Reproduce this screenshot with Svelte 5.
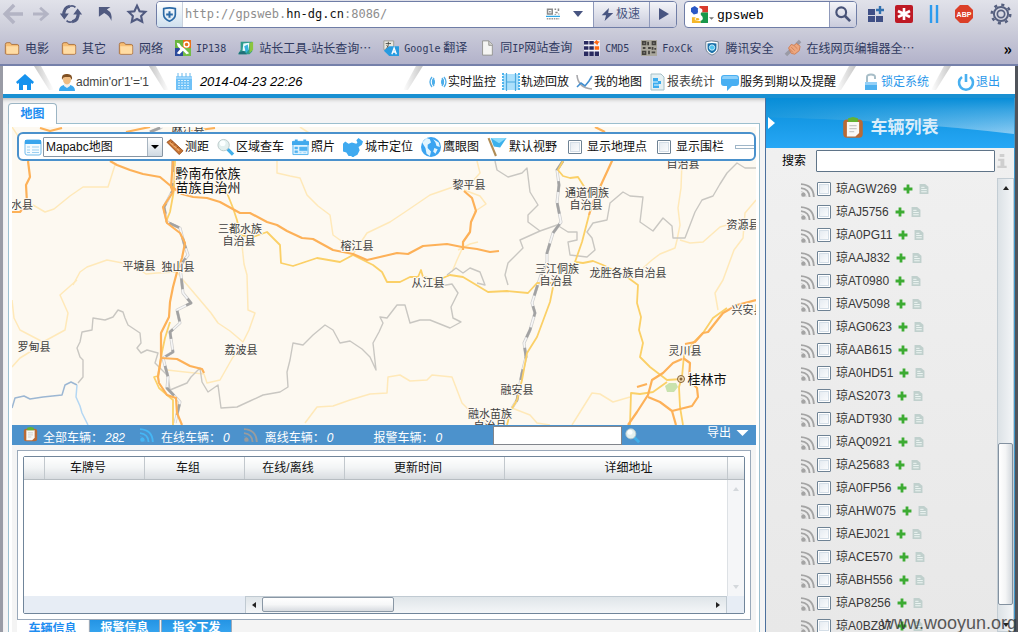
<script>
  const bookmarks = [
    { icon: 'folder', parts: ['电影'] },
    { icon: 'folder', parts: ['其它'] },
    { icon: 'folder', parts: ['网络'] },
    { icon: 'ip', parts: ['', 'IP138'] },
    { icon: 'tool', parts: ['站长工具-站长查询⋯'] },
    { icon: 'translate', parts: ['', 'Google', ' 翻译'] },
    { icon: 'page', parts: ['同', 'IP', '网站查询'] },
    { icon: 'grid', parts: ['', 'CMD5'] },
    { icon: 'qr', parts: ['', 'FoxCk'] },
    { icon: 'shield', parts: ['腾讯安全'] },
    { icon: 'hands', parts: ['在线网页编辑器全⋯'] }
  ];
  const menu = [
    { icon: 'signal', label: '实时监控' },
    { icon: 'film', label: '轨迹回放' },
    { icon: 'chart', label: '我的地图' },
    { icon: 'report', label: '报表统计', soft: true },
    { icon: 'bubble', label: '服务到期以及提醒' }
  ];
  const tools = [
    { icon: 'ruler', label: '测距' },
    { icon: 'lens', label: '区域查车' },
    { icon: 'photo', label: '照片' },
    { icon: 'china', label: '城市定位' },
    { icon: 'globe', label: '鹰眼图' },
    { icon: 'flag', label: '默认视野' }
  ];
  const plates = ['AGW269', 'AJ5756', 'A0PG11', 'AAJ832', 'AT0980', 'AV5098', 'AG0623', 'AAB615', 'A0HD51', 'AS2073', 'ADT930', 'AQ0921', 'A25683', 'A0FP56', 'AHW075', 'AEJ021', 'ACE570', 'ABH556', 'AP8256', 'A0BZ87'];
  const places = [
    [188, 133, '麻江县'], [22, 209, '水县'], [240, 233, '三都水族'], [239, 245, '自治县'],
    [357, 250, '榕江县'], [139, 270, '平塘县'], [178, 271, '独山县'], [469, 189, '黎平县'],
    [587, 197, '通道侗族'], [586, 209, '自治县'], [683, 168, '自治县'], [743, 229, '资源县'],
    [557, 273, '三江侗族'], [556, 285, '自治县'], [628, 277, '龙胜各族自治县'], [428, 287, '从江县'],
    [34, 351, '罗甸县'], [241, 354, '荔波县'], [685, 355, '灵川县'], [748, 314, '兴安县'],
    [517, 394, '融安县'], [490, 418, '融水苗族'], [490, 430, '自治县']
  ];
  const minorRoads = [
    '33 205 45 212 54 209 70 196 83 187 108 187 115 165',
    '277 161 277 173 290 176 300 178 307 195 318 206 330 215 333 235 347 245',
    '353 254 367 233 390 222 405 212 430 195 453 187 470 184 480 173 477 161',
    '73 285 80 272 87 267 107 260 133 265 146 274 157 273 177 272',
    '77 280 60 295 68 313 65 330 43 342 20 330 14 318 12 300', '12 367 20 358 33 350',
    '237 230 242 245 244 264 247 275 248 310 255 313 249 330 243 342 230 331 218 323 211 313 200 300 183 280 177 272',
    '243 345 233 357 220 380 207 383 204 374 185 372 167 370',
    '305 423 317 407 333 406 350 400 370 394 387 393 388 377 400 375 410 381 427 380 432 375 452 377 462 403 475 416 490 425',
    '572 425 592 393 600 394 613 402 630 397',
    '682 161 681 188 678 208 680 225 677 240 675 248 660 254 652 260 643 268',
    '680 240 690 243 703 242 720 227 737 222', '756 200 745 213 743 238 734 250 723 280 715 293 718 310',
    '463 247 457 260 452 272', '12 127 24 145 30 161', '300 127 320 140', '458 250 470 244 478 242',
    '464 190 480 196 486 204 474 212', '512 408 530 415 537 423 550 425'
  ];
  const yellowRoads = [
    '213 185 227 193 233 208 237 220 240 235 253 237 267 232 280 245 281 263 293 266 302 263 317 258 340 262 353 255 373 265 382 272 387 282 400 282 410 277 418 277 421 270 423 277 438 280 450 275 463 277 488 292 507 291 528 293 537 283 553 283',
    '563 161 558 170 563 176 570 178 578 177 585 188 592 190', '589 215 582 242 575 262 583 263 593 261 603 265 627 277 638 285 637 303 641 317 639 330 643 343 640 357 650 367 667 380 682 379',
    '553 287 550 302 537 337 527 353 522 380 517 400 511 410 507 425',
    '175 161 174 190 170 212 166 222', '170 322 165 338 162 352 158 376 154 377 159 388 173 400 173 425',
    '727 308 713 318 703 333 693 343 684 355 682 377 679 387 680 407 683 425', '630 425 631 393 640 394 653 392 667 382'
  ];
  const mainRoads = [
    '110 161 117 165 130 170 143 174 160 177 172 187 182 194 193 197 207 198 220 202 240 213 250 213 267 222 277 225 287 231 302 238 313 239 333 250 353 254 367 260 380 257 397 253 408 254 423 246 447 244 462 247 477 249 490 252 499 251',
    '175 127 173 161 171 187 173 192 163 207 167 223 180 233 185 243 182 258 177 272 173 287 170 302 169 317 161 333 161 358 158 377 159 383 167 395 176 398 177 413 182 425',
    '161 358 177 359 190 366 202 369 204 373', '28 161 30 177 26 185 27 203 20 212 12 212',
    '464 191 472 198 476 211 471 222 470 232 463 242 463 250', '617 150 612 161 600 187 593 202 589 215',
    '756 300 737 305 723 313 708 332 703 333 695 342 685 344',
    '683 358 690 363 689 380 697 388 698 397 692 406 672 411 660 402 648 397',
    '682 359 673 363 663 373 652 380 648 395 637 412 628 425', '672 411 676 425', '637 387 647 384',
    '40 128 50 131 62 128', '126 132 150 127', '185 132 215 128', '595 127 605 132'
  ];
  const rails = [
    '173 161 173 190 164 207 167 222 180 228 184 243 188 255 180 266 183 293 191 303 177 310 180 323 170 332 173 352 163 358 168 377 167 388 180 402 175 423',
    '563 161 557 170 559 185 557 202 561 222 553 233 547 253 547 262 541 275 537 287 532 303 535 313 530 330 524 343 526 357 522 373 517 400 512 408',
    '150 132 162 127'
  ];
  const borders = [
    '78 383 83 377 83 360 80 357 77 348 80 342 82 332 92 330 93 318 105 320 113 317 118 310 123 312 125 318 128 325 140 333 141 343 137 348 141 353 147 350 158 353 155 363 168 376 170 390 187 383 191 377 200 368 202 382 208 392 218 385 221 408 237 407 250 401 263 395 280 392 288 387 287 372 290 360 293 343 303 345 313 335 325 325 333 330 340 343 350 341 362 349 370 357 376 370 373 343 379 332 383 323 380 317 387 318 397 305 405 305 410 323 420 320 430 320 440 324 450 328 461 322 453 318 451 307 458 293 452 284 440 286',
    '495 161 497 170 508 177 522 173 527 168 530 192 538 205 528 215 528 222 540 231 557 225 568 232 577 232 577 240 568 242 570 255 587 257 595 250 592 238 587 232 593 223 607 220 610 203 623 192 630 196 643 197 640 222 653 231 663 218 672 226 673 238 685 238 695 212 702 200 713 196 720 184 727 173 737 163 745 168 756 168',
    '540 231 520 240 523 248 508 263 505 275 508 285',
    '447 275 456 268 463 273 470 268 480 272 485 285 477 283'
  ];
  let mapType = $state('Mapabc地图');
  let query = $state('gpsweb');
</script>

{#snippet icon(name)}
  <svg class="ico {name}" viewBox="0 0 18 18" aria-hidden="true">
    {#if name === 'folder'}
      <path d="M1.5 15V5q0-2 2-2h3.500l1.500 2H15q1.500 0 1.500 2v8q0 1-1.500 1H3q-1.500 0-1.500-1z" fill="#f6bd73" stroke="#a86f3c" /><path d="M2.500 7h13.500v7q0 1.500-1 1.500H3z" fill="#ffdca4" />
    {:else if name === 'ip'}
      <path d="M0 0h9v9H0z" fill="#69b53f" /><path d="M9 0h9v9H9z" fill="#e8701a" /><path d="M0 9h9v9H0z" fill="#2b4a9c" /><path d="M9 9h9v9H9z" fill="#74bd46" /><path d="M2 3l3 1 2 3 3 2 6 6-3 1-4-4-4 4-3-1 4-5-3-3z" fill="#fff" /><circle cx="13" cy="5" r="2.800" fill="none" stroke="#fff" stroke-width="1.600" />
    {:else if name === 'tool'}
      <path d="M3 2h13v11l-3 3H0l3-5z" fill="#2d9b8c" /><path d="M6 4l7-1-1 8-7 2z" fill="#e8fbff" /><path d="M7 7l4-2 1 6-3 4z" fill="#35b2dc" /><path d="M13 3l4-1v9l-4 4z" fill="#8bc53f" /><path d="M1 14l5-2 4 4H1z" fill="#206e78" />
    {:else if name === 'translate'}
      <path d="M1 1h11v10H1z" fill="#e9e8e1" stroke="#9b9b91" /><path d="M3 4h6M6 2v3q0 4-3 5M4 6q2 3 5 4" stroke="#4a4a42" fill="none" /><path d="M7 7h11v11H7l-6-6z" fill="#279be0" /><path d="M10 16l2.500-7 2.500 7M11 13.500h3" fill="none" stroke="#fff" stroke-width="1.500" />
    {:else if name === 'page'}
      <path d="M4 1h7l4 4v12H4z" fill="#f5f5f3" stroke="#91918d" /><path d="M11 1v5h4" fill="#d0d0cc" stroke="#91918d" />
    {:else if name === 'grid'}
      <path d="M0 0h18v18H0z" fill="#f3f3fa" /><path d="M0 1h5v4H0zM6 1h5v4H6zM0 7h5v4H0zM6 7h5v4H6zM0 13h5v5H0zM6 13h5v5H6zM12 13h5v5h-5z" fill="#292a60" /><path d="M12 7h5v4h-5zM14 0l1.500 1.500L18 2l-2 1.500-1 2.500-2-2-2-1z" fill="#ff6814" />
    {:else if name === 'qr'}
      <path d="M0 0h18v18H0z" fill="#aaa79d" /><path d="M1 1h5v5H1zM12 1h5v5h-5zM1 12h5v5H1zM7 2h2v4H7zM8 8h3v2H8zM2 8h3v2H2zM12 8h2v3h-2zM8 12h2v4H8zM12 13h4v2h-4zM15 9h2v2h-2z" fill="#45433f" /><path d="M3 3h1v1H3zM14 3h1v1h-1zM3 14h1v1H3z" fill="#fff" />
    {:else if name === 'shield'}
      <path d="M2 2q6-2 14 0v7q0 5-7 8-7-3-7-8z" fill="#fff" stroke="#64798c" /><path d="M4 4q5-1.500 10 0v5q0 4-5 6-5-2-5-6z" fill="#1a6fa8" /><circle cx="9" cy="8.500" r="3" fill="#4fc4ef" stroke="#d6f5ff" />
    {:else if name === 'hands'}
      <path d="M1 17l5-5M13 5l4-4" stroke="#9a9aa6" stroke-width="4" /><path d="M4 9l3-4 3 1 3-2 4 3-1 5-5 4-4-1z" fill="#eda77f" stroke="#cf7c50" /><path d="M7 8l4 4M10 6l4 4M5 10l4 4" stroke="#cb8058" />
    {:else if name === 'signal'}
      <g fill="none" stroke="#52aee8" stroke-width="1.300"><path d="M3 4q-4 5 0 10M15 4q4 5 0 10M5 5q-3 4 0 8M13 5q3 4 0 8" /></g><ellipse cx="4.500" cy="9" rx="1.500" ry="3" fill="#4caeea" /><ellipse cx="13.500" cy="9" rx="1.500" ry="3" fill="#4caeea" />
    {:else if name === 'film'}
      <path d="M1 1h16v16H1z" fill="#ade0fb" /><path d="M1 0v18M17 0v18" stroke="#4fb4ed" stroke-width="2" stroke-dasharray="2 1" /><path d="M4.500 0v18M13.500 0v18M5 9h8" stroke="#4da9df" stroke-width="1.200" />
    {:else if name === 'chart'}
      <path d="M2 2q1 13 15 14" fill="none" stroke="#a8a8ac" stroke-width="1.600" /><path d="M2 14l4-4 4 3 4-5 3-5" fill="none" stroke="#418ed0" stroke-width="1.600" />
    {:else if name === 'report'}
      <path d="M3 1h10l3 3v13H3z" fill="#e4f0f3" stroke="#a5c0c8" /><path d="M5 5h5v3h3v3h-2v4H5z" fill="#3bacee" /><path d="M5 9h5M6 12h6" stroke="#e4f7ff" />
    {:else if name === 'bubble'}
      <path d="M3 2h12q3 0 3 3v5q0 3-3 3h-4l-5 5v-5H3q-3 0-3-3V5q0-3 3-3z" fill="#49aff2" /><path d="M3 3h12q2 0 2 3H1q0-3 2-3z" fill="#8dd0fa" />
    {:else if name === 'lock'}
      <path d="M5 9V4q0-2.500 4-2.500T13 4v2" fill="none" stroke="#a8bec8" stroke-width="2" /><path d="M3 9h12v8H3z" fill="#4eb1ef" /><path d="M3 9h12v3H3z" fill="#93d0f7" />
    {:else if name === 'power'}
      <path d="M5 4a7 7 0 1 0 8 0" fill="none" stroke="#49b0f0" stroke-width="2.600" /><path d="M9 1v8" stroke="#49b0f0" stroke-width="2.600" />
    {:else if name === 'home'}
      <path d="M9 1l9 8-1.500 2L15 10v7h-4v-5H7v5H3v-7l-1.500 1L0 9z" fill="#1592ee" />
    {:else if name === 'user'}
      <path d="M1 18q0-5 5-6h6q5 1 5 6z" fill="#3ba8ee" /><path d="M6 10h6v3l-3 2-3-2z" fill="#f3f0ec" /><ellipse cx="9" cy="6.500" rx="4" ry="5" fill="#f0bd83" /><path d="M4 7Q3 1 8 1q7-1 6 6l-2-3H7q-2 0-3 3z" fill="#805022" />
    {:else if name === 'calendar'}
      <path d="M1 3h16v14H1z" fill="#6fc1f7" /><path d="M1 3h16v3H1z" fill="#9cd5fb" /><path d="M3 0v4M7 0v4M11 0v4M15 0v4" stroke="#6bb8ea" /><path d="M3 7.500h12M3 10h12M3 12.500h12M3 15h12" stroke="#d8f1ff" stroke-dasharray="2 1" />
    {:else if name === 'window'}
      <rect x="1" y="2" width="16" height="15" rx="2" fill="#f4fbff" stroke="#73bbea" /><path d="M1 2h16v4H1z" fill="#3aa5ed" /><path d="M3 9h3M8 9h7M3 12h3M8 12h7M3 14.500h3M8 14.500h7" stroke="#9bcff0" />
    {:else if name === 'ruler'}
      <path d="M1 4l4-3 13 12-4 4z" fill="#c87432" stroke="#99501e" /><path d="M4 4l10 9" stroke="#f0ac6c" stroke-width="1.500" /><path d="M7 3L5.500 4.500M10 6L8.500 7.500M13 9l-1.500 1.500" stroke="#8c4418" />
    {:else if name === 'lens'}
      <path d="M11 11l6 6" stroke="#42afe9" stroke-width="3.500" /><circle cx="7" cy="7" r="6" fill="#e3f0ef" stroke="#bac9c9" /><circle cx="6" cy="5" r="3" fill="#fbffff" />
    {:else if name === 'photo'}
      <path d="M1 3h16v14H1z" fill="#dff3ff" stroke="#4fb1ef" /><path d="M0 3h18v4H0zM3 1h3v3H3zM12 1h3v3h-3z" fill="#41a9ed" /><path d="M8 9h8v4H8zM3 9h3v2H3zM3 13h3v2H3zM8 15h2M12 15h3" fill="#51b3f1" stroke="#51b3f1" stroke-width=".500" />
    {:else if name === 'china'}
      <path d="M0 6l2-2 3 2 3-1 4 1 1-1-1-2 2-2 4 3-1 3-3 2 1 3-2 4-4 2-2-1-2 0-2-3-3-1z" fill="#3faaf0" /><circle cx="9" cy="17" r="1" fill="#3faaf0" />
    {:else if name === 'globe'}
      <circle cx="9" cy="9" r="9" fill="#3ba4f1" /><path d="M1 5l4-4 3 1 1 3-3 2 0 3 3 3-1 4-3-2-1-5zM11 2l5 3 1 4-3-1-1-3zM12 10l3 1-2 4-2-2z" fill="#e2f5ff" />
    {:else if name === 'flag'}
      <path d="M3 1h15l-6 9-6-1z" fill="#3bb1ec" /><path d="M3 1h15l-7 5z" fill="#8adaf9" /><path d="M1 1l7 17" stroke="#b18d55" stroke-width="2" />
    {:else if name === 'board'}
      <rect x="1" y="2" width="16" height="15" rx="3" fill="#b86a36" /><path d="M4 4h10v9l-3 3H4z" fill="#f9f9f6" /><path d="M6 7h6M6 9.500h6M6 12h4" stroke="#c9c9c7" /><path d="M5 1l4-1 4 1v3H5z" fill="#64b332" />
    {:else if name === 'rss'}
      <g fill="none" stroke="currentColor" stroke-width="2.400"><path d="M0 6.500q10.500 1 11 11.500M0 1.500q16 1 16.500 16.500" /><path d="M0 11q6 1 6.500 7" stroke-width="1.200" opacity=".500" /></g><circle cx="3" cy="15" r="2.800" fill="currentColor" />
    {:else if name === 'plus'}
      <path d="M9 1v16M1 9h16" stroke="#3cab32" stroke-width="5" />
    {:else if name === 'doc'}
      <path d="M1 0h10l6 5v13H1z" fill="#c0d0cd" /><path d="M4 6h6M4 10h10M4 14h10" stroke="#f4faf8" stroke-width="1.600" />
    {:else if name === 'info'}
      <path d="M6 0h6v4H6zM4 6h8v9h3v3H3v-3h4V9H4z" fill="#cfcfcf" />
    {:else if name === 'back'}
      <path d="M18 9H4M10 1L2 9l8 8" fill="none" stroke="#b3b4c4" stroke-width="3.200" />
    {:else if name === 'forward'}
      <path d="M0 9h14M8 2l8 7-8 7" fill="none" stroke="#b3b4c4" stroke-width="3.200" />
    {:else if name === 'reload'}
      <path d="M8 2Q2 3 2.500 11M10 16q6-1 5.500-9" fill="none" stroke="#505a80" stroke-width="2.800" /><path d="M-1 8.500h8L3 14zM19 9.500h-8L15 4z" fill="#505a80" /><path d="M8 2q3-1 5 1M10 16q-3 1-5-1" fill="none" stroke="#505a80" stroke-width="1.600" />
    {:else if name === 'undo'}
      <path d="M1 1h13l-4 3q7 4 5 13-2-6-8-9l-6 4z" fill="#505a80" />
    {:else if name === 'star'}
      <path d="M9 1.500l2.300 5 5.200.600-3.800 3.700 1 5.200L9 13.500 4.300 16l1-5.200L1.500 7.100l5.200-.600z" fill="none" stroke="#505a80" stroke-width="1.900" />
    {:else if name === 'safe'}
      <path d="M2 2q7-2 14 0v7q0 5-7 8-7-3-7-8z" fill="none" stroke="#2c6aa6" stroke-width="2" /><path d="M9 5v8M5 9h8" stroke="#2c6aa6" stroke-width="2.400" />
    {:else if name === 'code'}
      <path d="M1 2h8v8H1zM11 2h2v2h-2zM15 2h2v3h-2zM12 6h3v2h-3zM16 8h1v2h-1zM11 9h2v1h-2z" fill="#8b8b8b" /><path d="M3 4h4v4H3z" fill="#fff" /><path d="M4 5h2v2H4z" fill="#888" /><path d="M0 12h18" stroke="#2ba6e8" stroke-width="1.500" /><path d="M1 15h16" stroke="#999" stroke-width="2" stroke-dasharray="2 1" />
    {:else if name === 'bolt'}
      <path d="M11 0L1 10h6l-2 8L17 7h-7z" fill="#485581" />
    {:else if name === 'search'}
      <circle cx="7" cy="7" r="5.500" fill="none" stroke="#485378" stroke-width="2.400" /><path d="M11 11l6 6" stroke="#485378" stroke-width="3" />
    {:else if name === 'google'}
      <path d="M0 0h9v10H0z" fill="#fff" /><path d="M9 0h9v7H9z" fill="#d93b2d" /><path d="M10 7h8v11h-8z" fill="#19974b" /><path d="M1 12h9v6H1z" fill="#f5b729" /><path d="M0 2l4-2 4 3-1 5-4 1-3-3z" fill="#2a57c5" /><path d="M8 2q5 0 4 4-4 2 0 5 2 4-3 5-6 0-5-3 1-2 5-2-2-2 0-4-3-2-1-5z" fill="#fff" /><path d="M5 13q3-1 4 1-1 2-4 1z" fill="#f5b729" />
    {:else if name === 'apps'}
      <path d="M1 4h7v6H1zM1 11h7v6H1zM9 11h7v6H9z" fill="#3f4f85" /><path d="M13 1v8M9 5h8" stroke="#3271ae" stroke-width="2.400" />
    {:else if name === 'asterisk'}
      <rect width="18" height="18" rx="2" fill="#be1924" /><path d="M9 3v12M3 6l12 6M15 6L3 12" stroke="#fff" stroke-width="2.600" />
    {:else if name === 'bars'}
      <path d="M2 0v18M8 0v18" stroke="#2c9bee" stroke-width="2.400" />
    {:else if name === 'abp'}
      <path d="M5 0h8l5 5v8l-5 5H5l-5-5V5z" fill="#db3f28" /><text x="9" y="12" text-anchor="middle" class="abp-text">ABP</text>
    {:else if name === 'gear'}
      <circle cx="9" cy="9" r="7.600" fill="none" stroke="#56607f" stroke-width="2" stroke-dasharray="2.500 3.470" /><circle cx="9" cy="9" r="5.800" fill="none" stroke="#56607f" stroke-width="1.600" /><circle cx="9" cy="9" r="3" fill="none" stroke="#56607f" stroke-width="1.400" />
    {/if}
  </svg>
{/snippet}

<div class="screen">
  <header class="browser">
    <div class="address-row">
      <div class="nav-buttons">
        {#each ['back', 'forward', 'reload', 'undo', 'star'] as n}
          <button aria-label={n}>{@render icon(n)}</button>
        {/each}
      </div>
      <div class="url-box">
        <button class="safe-btn" aria-label="safe">{@render icon('safe')}</button>
        <div class="url">http://gpsweb.<b>hn-dg.cn</b>:8086/</div>
        {@render icon('code')}
        <svg class="down" viewBox="0 0 10 6" aria-hidden="true"><path d="M0 0h10L5 6z" fill="#485581" /></svg>
        <button class="speed">{@render icon('bolt')}极速</button>
        <button class="go" aria-label="go"><svg viewBox="0 0 10 12"><path d="M0 0l10 6-10 6z" fill="#485581" /></svg></button>
      </div>
      <div class="search-box">
        {@render icon('google')}
        <svg class="mini" viewBox="0 0 6 3" aria-hidden="true"><path d="M0 0h6L3 3z" fill="#777" /></svg>
        <input aria-label="search" bind:value={query} />
        <button aria-label="search">{@render icon('search')}</button>
      </div>
      <div class="plugins">
        {#each ['apps', 'asterisk', 'bars', 'abp', 'gear'] as n}
          <button aria-label={n}>{@render icon(n)}</button>
        {/each}
      </div>
    </div>
    <nav class="bookmarks">
      {#each bookmarks as b}
        <a href="#top">{@render icon(b.icon)}<span>{b.parts[0]}{#if b.parts[1]}<i>{b.parts[1]}</i>{/if}{b.parts[2] ?? ''}</span></a>
      {/each}
      <button class="more">»</button>
    </nav>
  </header>

  <div class="app">
    <header class="topbar">
      <a class="home" href="#top" aria-label="home">{@render icon('home')}</a>
      <span class="slant falling"></span>
      <span class="who">{@render icon('user')}admin'or'1'='1</span>
      <span class="slant falling"></span>
      <span class="date">{@render icon('calendar')}<em>2014-04-23 22:26</em></span>
      <span class="slant rising push"></span>
      <nav class="menu">
        {#each menu as m}
          <a href="#top" class:soft={m.soft}>{@render icon(m.icon)}{m.label}</a>
        {/each}
      </nav>
      <span class="slant rising"></span>
      <a class="act" href="#top">{@render icon('lock')}锁定系统</a>
      <span class="slant rising"></span>
      <a class="act exit" href="#top">{@render icon('power')}退出</a>
    </header>

    <div class="columns">
      <main>
        <div class="map-tabs"><button>地图</button></div>
        <div class="pane">
          <section class="map">
            <svg class="drawing" viewBox="12 127 744 298" preserveAspectRatio="xMidYMid slice" role="img" aria-label="地图">
              <rect x="12" y="127" width="744" height="298" fill="#fdf9f1" />
              <g fill="none" stroke-linejoin="round">
                <g stroke="#ffe9b9" stroke-width="1.500">{#each minorRoads as p}<polyline points={p} />{/each}</g>
                <g stroke="#c9c7c2" stroke-width="1.400">{#each borders as p}<polyline points={p} />{/each}</g>
                <polyline points="12 408 15 398 24 396 30 399 43 397 62 395 65 385 71 382 77 385" stroke="#9cb7d3" stroke-width="1.500" />
                <polyline points="77 385 76 397 80 406 82 413 88 425" stroke="#b4d7f3" stroke-width="1.500" />
                <g stroke="#cdcdcd" stroke-width="3">{#each rails as p}<polyline points={p} />{/each}</g>
                <g stroke="#f6f6f6" stroke-width="1.600">{#each rails as p}<polyline points={p} />{/each}</g>
                <g stroke="#a2a2a2" stroke-width="2.600" stroke-dasharray="11 11">{#each rails as p}<polyline points={p} />{/each}</g>
                <g stroke="#fbd067" stroke-width="1.800">{#each yellowRoads as p}<polyline points={p} />{/each}</g>
                <g stroke="#fdb158" stroke-width="2.200">{#each mainRoads as p}<polyline points={p} />{/each}</g>
              </g>
              <path d="M665 386l4-3h7l2 4-4 5h-7z" fill="#c9e2ae" />
              <circle cx="681" cy="379" r="3.500" fill="#f3dfb7" stroke="#87643b" /><circle cx="681" cy="379" r="1.500" fill="#87643b" />
              <g class="place">{#each places as [x, y, t]}<text {x} {y}>{t}</text>{/each}</g>
              <g class="city"><text x="208" y="178">黔南布依族</text><text x="208" y="192">苗族自治州</text><text x="707" y="384">桂林市</text></g>
            </svg>
            <div class="toolbar">
              {@render icon('window')}
              <div class="select-wrap">
                <select aria-label="地图" bind:value={mapType}><option>Mapabc地图</option></select>
                <span class="arrow"><svg viewBox="0 0 8 4"><path d="M0 0h8L4 4z" /></svg></span>
              </div>
              {#each tools as t}
                <button>{@render icon(t.icon)}{t.label}</button>
              {/each}
              <label><input type="checkbox" />显示地理点</label>
              <label><input type="checkbox" />显示围栏</label>
              <span class="track"></span>
            </div>
          </section>

          <div class="status">
            <span class="stat">{@render icon('board')}全部车辆：<em>282</em></span>
            <span class="stat on">{@render icon('rss')}<span>在线车辆：<em>0</em></span></span>
            <span class="stat off">{@render icon('rss')}<span>离线车辆：<em>0</em></span></span>
            <span class="stat alarm">报警车辆：<em>0</em></span>
            <input aria-label="搜索车辆" />
            {@render icon('lens')}
            <button class="export">导出<svg viewBox="0 0 12 6"><path d="M0 0h12L6 6z" fill="#fff" /></svg></button>
          </div>

          <section class="records">
            <div class="panel">
              <div class="frame">
                <table>
                  <colgroup><col class="c0" /><col class="c1" /><col class="c1" /><col class="c1" /><col class="c2" /><col /><col class="c3" /></colgroup>
                  <thead><tr><th></th><th>车牌号</th><th>车组</th><th>在线/离线</th><th>更新时间</th><th class="addr">详细地址</th><th></th></tr></thead>
                  <tbody><tr><td colspan="6"></td><td class="vbar"><div><svg viewBox="0 0 6 4"><path d="M0 4h6L3 0z" /></svg><svg viewBox="0 0 6 4"><path d="M0 0h6L3 4z" /></svg></div></td></tr></tbody>
                </table>
                <div class="hrow">
                  <div class="hbar">
                    <svg viewBox="0 0 4 6"><path d="M4 0v6L0 3z" /></svg>
                    <span class="thumb"></span>
                    <svg viewBox="0 0 4 6"><path d="M0 0v6l4-3z" /></svg>
                  </div>
                </div>
              </div>
            </div>
            <div class="bottom-tabs"><button class="active">车辆信息</button><button>报警信息</button><button>指令下发</button></div>
          </section>
        </div>
      </main>

      <aside>
        <div class="banner">
          <svg class="swoosh" viewBox="0 0 248 50" preserveAspectRatio="none" aria-hidden="true">
            <defs><linearGradient id="glow"><stop offset="0" stop-color="#2ba3e4" /><stop offset="1" stop-color="#8acbf3" /></linearGradient><linearGradient id="fade" x2="0" y2="1"><stop offset="0" stop-color="#078dd8" /><stop offset=".350" stop-color="#078dd8" stop-opacity=".600" /><stop offset="1" stop-color="#078dd8" stop-opacity="0" /></linearGradient></defs>
            <path d="M0 0h248v36Q130 22 0 19z" fill="url(#glow)" /><path d="M0 0h248v36Q130 22 0 19z" fill="url(#fade)" />
          </svg>
          <svg class="fold" viewBox="0 0 7 12" aria-hidden="true"><path d="M0 0l7 6-7 6z" fill="#fff" /></svg>
          <h2>{@render icon('board')}车辆列表</h2>
        </div>
        <div class="find"><label for="find">搜索</label><input id="find" />{@render icon('info')}</div>
        <div class="list-area">
          <ul>
            {#each plates as p}
              <li>{@render icon('rss')}<label><input type="checkbox" /><span>琼{p}</span></label><button aria-label="add">{@render icon('plus')}</button><button aria-label="details">{@render icon('doc')}</button></li>
            {/each}
          </ul>
          <div class="scroll">
            <svg viewBox="0 0 6 4"><path d="M0 4h6L3 0z" /></svg>
            <span class="before"></span><span class="thumb"></span>
            <svg viewBox="0 0 6 4"><path d="M0 0h6L3 4z" /></svg>
          </div>
        </div>
      </aside>
    </div>
  </div>
  <div class="mark">www.wooyun.org</div>
</div>

<style>
  :global(body) { margin: 0; }
  .screen { position: relative; height: 100vh; display: flex; flex-direction: column; overflow: hidden; font: 12px/16px "Liberation Sans", "Noto Sans CJK SC", sans-serif; color: #111; }
  .screen * { box-sizing: border-box; }
  button, input, select { font: inherit; color: inherit; margin: 0; padding: 0; border: 0; background: none; }
  a { color: inherit; text-decoration: none; }
  .ico { width: 18px; height: 18px; flex: none; overflow: visible; display: block; }
  .browser { flex: none; background: linear-gradient(#e1e2ea, #cfd0dc 40%, #b2b2ca); border-bottom: 2px solid #7580aa; color: #303a60; }
  .address-row { display: flex; height: 28px; align-items: center; padding-left: 3px; }
  .nav-buttons { display: grid; grid-template-columns: 30px 28px 37px 29px 29px; }
  .nav-buttons .ico { width: 20px; height: 20px; }
  .nav-buttons .undo, .nav-buttons .forward { width: 16px; }
  .url-box { flex: 1; display: flex; align-items: center; height: 27px; margin-right: 7px; background: #fff; border: 1px solid #6f7da6; border-radius: 4px; overflow: hidden; color: #8e8e8e; }
  .safe-btn { width: 26px; height: 100%; padding-left: 5px; background: linear-gradient(#fff, #cfe0ee); border-right: 1px solid #cad2dd; }
  .safe-btn .ico { width: 15px; height: 15px; }
  .url { flex: 1; font: 12px/24px "DejaVu Sans Mono", monospace; padding-left: 2px; }
  .url b { color: #111; font-weight: normal; }
  .ico.code { width: 14px; height: 14px; }
  .down { width: 10px; height: 6px; margin: 0 10px 0 13px; }
  .speed { display: flex; align-items: center; gap: 2px; height: 100%; width: 56px; padding-left: 7px; color: #485581; background: linear-gradient(#f3f4f8, #c9cbdc); border-left: 1px solid #8f99ba; }
  .ico.bolt { width: 13px; height: 15px; }
  .go { height: 100%; width: 27px; padding-left: 9px; background: linear-gradient(#f3f4f8, #c9cbdc); border-left: 1px solid #8f99ba; }
  .go svg { width: 10px; height: 12px; display: block; }
  .search-box { width: 173px; height: 27px; display: flex; align-items: center; margin-right: 10px; padding-left: 6px; background: #fff; border: 1px solid #6f7da6; border-radius: 4px; overflow: hidden; }
  .search-box .google { width: 17px; height: 17px; }
  .mini { width: 5px; height: 3px; margin: 9px 3px 0 1px; }
  .search-box input { flex: 1; min-width: 0; padding-top: 4px; font: 13px/20px "Liberation Mono", monospace; color: #000; }
  .search-box button { width: 27px; height: 100%; padding-left: 5px; background: linear-gradient(#f3f4f8, #c9cbdc); border-left: 1px solid #8f99ba; }
  .ico.search { width: 16px; height: 16px; }
  .plugins { display: grid; grid-template-columns: 28px 34px 26px 35px 28px; align-items: center; }
  .ico.gear { width: 22px; height: 22px; }
  .abp-text { font: bold 7px "Liberation Sans", sans-serif; fill: #fff; }
  .bookmarks { display: flex; align-items: center; gap: 12px; height: 36px; padding: 7px 6px 3px 4px; white-space: nowrap; font-family: "Noto Sans CJK SC", sans-serif; }
  .bookmarks a { display: flex; align-items: center; gap: 5px; }
  .bookmarks .ico { width: 16px; height: 16px; }
  .bookmarks span { white-space: pre; }
  .bookmarks i { font: 10px/16px "DejaVu Sans Mono", monospace; }
  .more { margin-left: auto; font-weight: bold; font-size: 16px; color: #000; }
  .app { flex: 1; min-height: 0; display: flex; flex-direction: column; border-left: 3px solid #999ba5; border-right: 3px solid #50545b; background: #f4f4f5; }
  .topbar { flex: none; display: flex; align-items: center; height: 32px; padding: 4px 15px 0 13px; background: #fff; border-bottom: 4px solid #1990d2; white-space: nowrap; }
  .slant { width: 20px; height: 24px; margin-top: -4px; align-self: flex-start; }
  .falling { background: linear-gradient(90deg, #c6c6c6, #fff); clip-path: polygon(0 0, 35% 0, 100% 100%, 75% 100%); }
  .rising { background: linear-gradient(270deg, #c6c6c6, #fff); clip-path: polygon(65% 0, 100% 0, 25% 100%, 0 100%); }
  .who { display: flex; align-items: center; margin: 0 0 0 4px; color: #444; }
  .date { display: flex; align-items: center; gap: 7px; margin-left: 6px; font-size: 13px; color: #000; }
  .push { margin-left: auto; }
  .menu { display: flex; gap: 6px; margin-left: 6px; }
  .menu a, .act { display: flex; align-items: center; gap: 1px; }
  .menu .soft { color: #444; }
  .act { color: #2a97ea; margin: 0 2px 0 6px; }
  .exit { margin-right: 0; }
  .columns { flex: 1; min-height: 0; display: flex; box-shadow: inset 0 4px 4px -3px #aaa; }
  main { flex: 1; min-width: 0; display: flex; flex-direction: column; padding: 5px 5px 0 5px; }
  .map-tabs { height: 20px; flex: none; }
  .map-tabs button { position: relative; height: 21px; width: 49px; background: #fff; border: 1px solid #9cb5c4; border-bottom: 0; border-radius: 4px 4px 0 0; color: #1e8df1; font-weight: bold; }
  .pane { flex: 1; min-height: 0; display: flex; flex-direction: column; background: #fff; border: 1px solid #9cbfce; border-bottom: 0; padding: 3px 3px 0; }
  .map { position: relative; flex: 1; min-height: 0; overflow: hidden; }
  .drawing { display: block; width: 100%; height: 100%; }
  .place { font-size: 11px; fill: #3f3f3f; text-anchor: middle; }
  .city { font-size: 13px; fill: #111; text-anchor: middle; }
  .drawing text { stroke: #fdf9f1; stroke-width: 2px; paint-order: stroke; }
  .toolbar { position: absolute; inset: 5px 0 auto 5px; height: 29px; display: flex; align-items: center; background: #fff; border: 2px solid #4a91cc; border-radius: 6px; padding-left: 5px; white-space: nowrap; overflow: hidden; }
  .select-wrap { position: relative; flex: none; width: 120px; height: 20px; margin: 0 3px 0 1px; }
  select { width: 100%; height: 100%; appearance: none; border: 1px solid #8795a3; background: #fff; padding-left: 2px; border-radius: 1px; }
  .arrow { position: absolute; right: 1px; top: 1px; width: 15px; height: 18px; display: grid; place-items: center; background: linear-gradient(#fff, #cfd9e2); border-left: 1px solid #a8b5c1; pointer-events: none; }
  .arrow svg { width: 8px; height: 4px; }
  .toolbar button { display: flex; align-items: center; gap: 2px; margin-right: 8px; }
  .toolbar .ruler, .toolbar .lens, .toolbar .photo { width: 17px; }
  .toolbar .china, .toolbar .globe { width: 20px; height: 20px; }
  .toolbar .flag { width: 20px; height: 19px; }
  .toolbar label { display: flex; align-items: center; gap: 5px; margin: 0 7px 0 3px; }
  input[type="checkbox"] { appearance: none; width: 14px; height: 14px; flex: none; border: 1px solid #6e8294; border-radius: 1px; background: linear-gradient(135deg, #e1e8ef, #fff); box-shadow: inset 0 0 0 1px #fff, inset 0 0 0 2px #d4dee7; }
  .track { flex: 1; height: 4px; margin-left: 4px; border: 1px solid #9fb6c8; border-right: 0; background: #fff; }
  .status { flex: none; display: flex; align-items: center; height: 20px; background: #4c92cc; color: #fff; padding: 0 7px 0 11px; white-space: nowrap; }
  .stat { display: flex; align-items: center; padding-top: 5px; }
  .stat em { margin-left: 2px; }
  .stat .ico { width: 15px; height: 15px; margin: -6px 5px 0 0; }
  .stat.on { margin-left: 15px; }
  .stat.off { margin-left: 14px; }
  .stat .ico.rss { margin-right: 7px; width: 14px; height: 14px; }
  .on .ico { color: #45b6f5; }
  .off .ico { color: #9a9c9e; }
  .alarm { margin-left: 40px; margin-right: auto; }
  .status > input { width: 129px; height: 19px; background: #fff; border: 1px solid #81858c; margin-right: 3px; }
  .status .lens { width: 15px; height: 15px; }
  .export { display: flex; align-items: center; gap: 5px; margin-left: 67px; padding-bottom: 4px; }
  .export svg { width: 13px; height: 6px; }
  .records { flex: 0 0 187px; overflow: hidden; background: #f4f4f4; padding: 5px 5px 0; }
  .panel { border: 1px solid #9aa9ba; background: #fff; padding: 5px; }
  .frame { border: 1px solid #70859a; border-radius: 2px; }
  table { width: 100%; border-collapse: collapse; table-layout: fixed; }
  .c0 { width: 20px; } .c1 { width: 100px; } .c2 { width: 160px; } .c3 { width: 17px; }
  th { height: 22px; padding: 0 12px 0 0; font-weight: normal; background: linear-gradient(#fff, #f2f4f5 50%, #d8dce0); border-right: 1px solid #c2c8cd; border-bottom: 1px solid #b7bdc2; }
  th:last-child { border-right: 0; padding: 0; }
  th.addr { padding: 0 0 0 26px; }
  td { height: 116px; padding: 0; }
  .vbar { background: #f5f6f8; border-left: 1px solid #dde1e5; }
  .vbar div { height: 116px; display: flex; flex-direction: column; justify-content: space-between; align-items: center; padding: 7px 0; }
  .vbar svg { width: 6px; height: 4px; fill: #d4d8dc; }
  .hrow { height: 17px; background: #e7edf5; padding: 0 17px 0 221px; }
  .hbar { height: 100%; display: flex; align-items: center; border: 1px solid #c0cad2; border-bottom: 0; background: linear-gradient(#dfe5e9, #f4f6f8); padding: 0 6px; }
  .hbar svg { width: 4px; height: 6px; fill: #222; }
  .hbar .thumb { width: 132px; height: 15px; margin: 0 auto 0 6px; border: 1px solid #8997a5; border-radius: 2px; background: linear-gradient(#fff, #f6f7f8 50%, #d7dbe0); }
  .bottom-tabs { display: flex; height: 18px; gap: 1px; }
  .bottom-tabs button { width: 71px; font-weight: bold; color: #fff; background: linear-gradient(#2494e4, #3caaf3); border: 1px solid #9aa9ba; border-top: 0; }
  .bottom-tabs .active { background: #fff; color: #1e8df1; border: 0; }
  aside { flex: 0 0 250px; display: flex; flex-direction: column; border-left: 1px solid #4c709d; border-right: 1px solid #4399cb; background: linear-gradient(#f1f1f1, #e8e8e8); }
  .banner { position: relative; flex: none; height: 50px; background: linear-gradient(#078dd8, #27a7f5); display: flex; justify-content: center; align-items: center; }
  .swoosh { position: absolute; inset: 0; width: 100%; height: 100%; }
  .fold { position: absolute; left: 2px; top: 19px; width: 7px; height: 12px; }
  h2 { position: relative; display: flex; align-items: center; gap: 7px; margin: 9px 0 0; font-size: 17px; line-height: 24px; color: #d9edfa; }
  h2 .ico { width: 22px; height: 22px; }
  .find { flex: none; display: flex; align-items: center; height: 26px; padding-left: 16px; margin-bottom: 3px; }
  .find label { margin-right: 10px; color: #000; }
  .find input { flex: 1; min-width: 0; height: 22px; background: #fff; border: 1px solid #5f7488; border-radius: 1px; }
  .find .ico { width: 14px; height: 14px; margin: 0 5px 0 0; }
  .list-area { flex: 1; min-height: 0; display: flex; }
  ul { flex: 1; min-height: 0; overflow: hidden; list-style: none; margin: 0; padding: 0 0 0 35px; }
  li { display: flex; align-items: center; height: 23px; color: #383838; }
  li .rss { width: 14px; height: 14px; color: #a4a4a4; margin: 3px 2px 0 0; }
  li label { display: flex; align-items: center; gap: 5px; margin-right: 6px; }
  li button { margin-right: 6px; }
  .ico.plus, .ico.doc { width: 10px; height: 10px; }
  .scroll { flex: 0 0 17px; display: flex; flex-direction: column; align-items: center; margin-top: 1px; padding: 7px 0 4px; border: 1px solid #c3cdd4; background: linear-gradient(90deg, #dce2e6, #f3f5f7); }
  .scroll svg { width: 6px; height: 4px; fill: #222; }
  .before { flex: 1; }
  .scroll .thumb { width: 15px; height: 162px; margin-bottom: 18px; border: 1px solid #8391a0; border-radius: 2px; background: linear-gradient(90deg, #fff, #f4f5f6 50%, #d3d8dd); }
  .mark { position: absolute; right: 1px; bottom: -1px; font-size: 18px; line-height: 20px; color: #333; opacity: .8; }
</style>
